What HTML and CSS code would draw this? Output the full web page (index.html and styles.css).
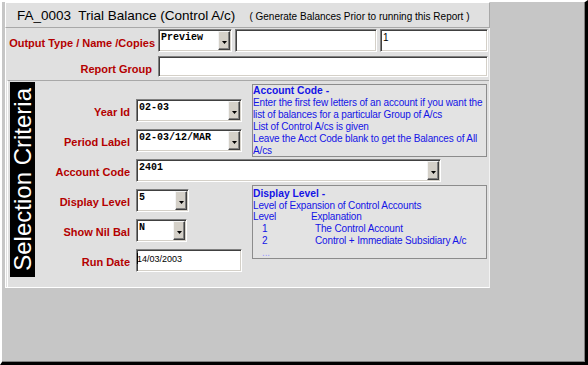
FILE: index.html
```html
<!DOCTYPE html>
<html>
<head>
<meta charset="utf-8">
<link rel="stylesheet" href="styles.css">
</head>
<body>
<div class="window">
  <div class="main">
    <div class="titlebar"><span class="title">FA_0003&nbsp; Trial Balance (Control A/c)</span><span class="subtitle">( Generate Balances Prior to running this Report )</span></div>
    <div class="form">
      <div class="row row-output">
        <div class="lbl lbl-main">Output Type / Name /Copies</div>
        <div class="combo w-preview"><span class="val mono">Preview</span><span class="btn"><svg width="5" height="3" viewBox="0 0 5 3"><polygon points="0,0 5,0 2.5,3" fill="#000"/></svg></span></div>
        <div class="text w-name"></div>
        <div class="text w-copies"><span class="val plain">1</span></div>
      </div>
      <div class="row row-group">
        <div class="lbl lbl-main lbl-group">Report Group</div>
        <div class="text w-group"></div>
      </div>
      <div class="criteria">
        <div class="sidebar"><span>Selection Criteria</span></div>
        <div class="crit-body">
          <div class="sec sec-a">
            <div class="fields fields-a">
              <div class="frow">
                <div class="lbl">Year Id</div>
                <div class="combo w-year"><span class="val mono">02-03</span><span class="btn"><svg width="5" height="3" viewBox="0 0 5 3"><polygon points="0,0 5,0 2.5,3" fill="#000"/></svg></span></div>
              </div>
              <div class="frow">
                <div class="lbl">Period Label</div>
                <div class="combo w-year"><span class="val mono">02-03/12/MAR</span><span class="btn"><svg width="5" height="3" viewBox="0 0 5 3"><polygon points="0,0 5,0 2.5,3" fill="#000"/></svg></span></div>
              </div>
            </div>
            <div class="info info-a">
              <div class="info-head">Account Code -</div>
              <div>Enter the first few letters of an account if you want the</div>
              <div>list of balances for a particular Group of A/cs</div>
              <div>List of Control A/cs is given</div>
              <div>Leave the Acct Code blank to get the Balances of All</div>
              <div>A/cs</div>
            </div>
          </div>
          <div class="frow acct">
            <div class="lbl">Account Code</div>
            <div class="combo w-acct"><span class="val mono">2401</span><span class="btn"><svg width="5" height="3" viewBox="0 0 5 3"><polygon points="0,0 5,0 2.5,3" fill="#000"/></svg></span></div>
          </div>
          <div class="sec sec-c">
            <div class="fields fields-c">
              <div class="frow">
                <div class="lbl">Display Level</div>
                <div class="combo w-disp"><span class="val mono">5</span><span class="btn"><svg width="5" height="3" viewBox="0 0 5 3"><polygon points="0,0 5,0 2.5,3" fill="#000"/></svg></span></div>
              </div>
              <div class="frow">
                <div class="lbl">Show Nil Bal</div>
                <div class="combo w-nil"><span class="val mono">N</span><span class="btn"><svg width="5" height="3" viewBox="0 0 5 3"><polygon points="0,0 5,0 2.5,3" fill="#000"/></svg></span></div>
              </div>
              <div class="frow">
                <div class="lbl">Run Date</div>
                <div class="text w-date"><span class="val date"><span class="caret"></span>14/03/2003</span></div>
              </div>
            </div>
            <div class="info info-c">
              <div class="info-head">Display Level -</div>
              <div>Level of Expansion of Control Accounts</div>
              <div class="lv"><span class="lv-a">Level</span><span>Explanation</span></div>
              <div class="lv"><span class="lv-n">1</span><span>The Control Account</span></div>
              <div class="lv"><span class="lv-n">2</span><span>Control + Immediate Subsidiary A/c</span></div>
              <div class="lv more"><span class="lv-n">...</span></div>
            </div>
          </div>
        </div>
      </div>
    </div>
  </div>
</div>
</body>
</html>
```

FILE: styles.css
```css
* { box-sizing: border-box; margin: 0; padding: 0; }

body {
  margin: 0;
  width: 588px;
  height: 365px;
  overflow: hidden;
  background: #c6c6c6;
  font-family: "Liberation Sans", Arial, sans-serif;
}

.window {
  width: 588px;
  height: 365px;
  background: #c6c6c6;
  border-top: 2px solid #fff;
  border-left: 2px solid #fff;
  border-right: 3px solid #000;
  border-bottom: 3px solid #000;
  box-shadow: inset -1px -1px 0 #808080;
}

.main {
  margin-left: 3px;
  width: 485px;
}

.titlebar {
  height: 26px;
  background: #e0e0e0;
  border: 1px solid;
  border-color: #fff #a8a8a8 #a8a8a8 #fff;
  padding-left: 11px;
  line-height: 23px;
  white-space: nowrap;
  color: #000;
}

.title { font-size: 13.5px; }

.subtitle {
  font-size: 10px;
  margin-left: 14px;
}

.form {
  background: #e0e0e0;
  border-left: 1px solid #fff;
  border-right: 1px solid #f2f2f2;
  border-bottom: 1px solid #fff;
  padding-top: 1px;
}

.row {
  display: flex;
  align-items: center;
}

.row-output { height: 23px; }
.row-group { height: 21px; margin-top: 4px; }

.lbl {
  font-size: 11px;
  font-weight: bold;
  color: #b40000;
  text-align: right;
  white-space: nowrap;
  padding-top: 2px;
}

.lbl-main {
  width: 149px;
  margin-right: 3px;
  padding-top: 4px;
}

.lbl-group { padding-right: 3px; }

.combo, .text {
  height: 100%;
  background: #fff;
  border: 1px solid;
  border-color: #808080 #fff #fff #808080;
  box-shadow: inset 1px 1px 0 #404040, inset -1px -1px 0 #d4d0c8;
  display: flex;
  overflow: hidden;
}

.frow .combo, .frow .text { height: 23px; }

.w-preview { width: 74px; }
.w-name { width: 142px; margin-left: 3px; }
.w-copies { width: 108px; margin-left: 3px; }
.w-group { width: 330px; }
.w-year { width: 106px; }
.w-acct { width: 305px; }
.w-disp { width: 53px; }
.w-nil { width: 51px; }
.w-date { width: 106px; }

.val {
  flex: 1;
  padding: 2px 0 0 2px;
  line-height: 12px;
  white-space: nowrap;
  color: #000;
}

.mono {
  font-family: "Liberation Mono", "Courier New", monospace;
  font-weight: bold;
  font-size: 10px;
}

.plain {
  font-size: 10px;
  padding-left: 2px;
  padding-top: 2px;
}

.date {
  font-size: 9px;
  padding-left: 0;
  padding-top: 3px;
  display: flex;
  align-items: flex-start;
}

.caret {
  display: inline-block;
  width: 1px;
  height: 11px;
  background: #000;
  margin-right: -1px;
}

.btn {
  width: 12px;
  margin: 1px 1px 1px 0;
  background: #d4d0c8;
  border: 1px solid;
  border-color: #f4f4f4 #404040 #404040 #f4f4f4;
  box-shadow: inset -1px -1px 0 #808080;
  display: flex;
  align-items: center;
  justify-content: center;
  padding-top: 3px;
}

.btn svg { display: block; }

.criteria {
  margin-top: 3px;
  margin-left: 1px;
  width: 482px;
  height: 207px;
  border-top: 1px solid #a8a8a8;
  border-left: 1px solid #fff;
  padding: 1px 0 0 2px;
  display: flex;
}

.sidebar {
  width: 25px;
  height: 195px;
  background: #000;
  display: flex;
  align-items: center;
  justify-content: center;
}

.sidebar span {
  writing-mode: vertical-rl;
  transform: rotate(180deg);
  font-size: 24px;
  line-height: 25px;
  color: #fff;
  white-space: nowrap;
}

.crit-body {
  flex: 1;
  display: flex;
  flex-direction: column;
}

.sec { display: flex; }

.sec-a { margin-top: 2px; height: 73px; }
.sec-c { margin-top: 3px; }

.fields {
  width: 207px;
  display: flex;
  flex-direction: column;
  gap: 7px;
}

.fields-a { padding-top: 15px; }
.fields-c { padding-top: 4px; }

.frow {
  display: flex;
  align-items: center;
  height: 23px;
}

.frow .lbl {
  width: 95px;
  margin-right: 6px;
}

.acct { margin-top: 2px; }

.info {
  margin-left: 10px;
  width: 235px;
  background: #e3e3e3;
  border: 1px solid #8c8c8c;
  color: #1414e6;
  font-size: 10px;
  letter-spacing: -0.15px;
  line-height: 12px;
  white-space: nowrap;
}

.info-a { height: 73px; }

.info-c {
  height: 74px;
  padding-top: 2px;
  line-height: 11.7px;
}

.info-head {
  font-weight: bold;
  font-size: 10.3px;
  letter-spacing: 0;
}

.lv { display: flex; }
.lv-a { width: 58px; }
.lv-n { width: 62px; padding-left: 9px; }
.more { color: #9a9aff; }
```
